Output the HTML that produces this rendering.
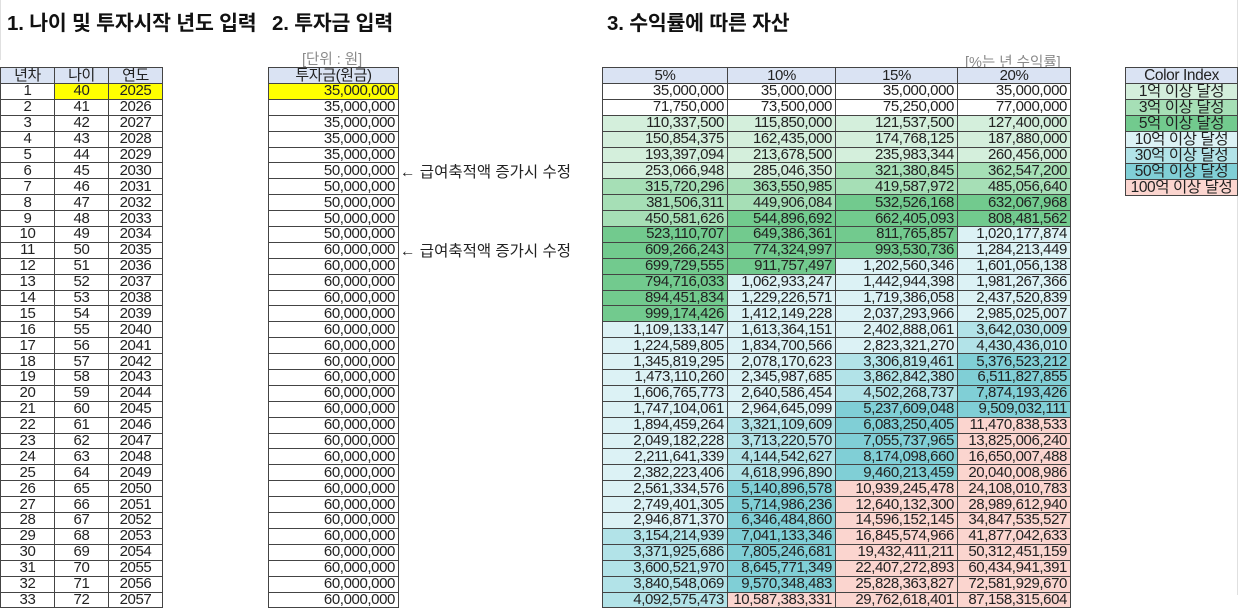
<!DOCTYPE html>
<html><head><meta charset="utf-8"><style>
body{margin:0;width:1241px;height:595px;overflow:hidden;background:#fff;position:relative;font-family:"Liberation Sans","Noto Sans CJK KR","NanumGothic",sans-serif;color:#222}
.t{position:absolute;font-weight:bold;font-size:20.5px;top:6px;letter-spacing:-0.2px;color:#111}
.g{position:absolute;font-size:14.5px;color:#8a8a8a}
table{position:absolute;border-collapse:collapse;table-layout:fixed;font-size:15px}
td{border:1px solid #444;height:14.9px;padding:0 3px;line-height:14px;white-space:nowrap;overflow:hidden;text-align:right;letter-spacing:-0.4px}
tr{height:15.9px}
tr.h td{background:#dae3f3;text-align:center;height:15px}
.c td{text-align:center}
.y{background:#ffff00}
.a{background:#d4efdc}.b{background:#a6dfb6}.d{background:#72ca8e}.e{background:#dcf2f5}.f{background:#b2e3e8}.k{background:#80cfd6}.p{background:#fbd5cf}
.note{position:absolute;left:400px;font-size:15.5px}
#ci td{text-align:center;height:15px;padding:0;font-size:15.5px}
.gl{position:absolute;top:0;width:1px;height:60px;background:#e0e0e0}
</style></head><body>
<div class="gl" style="left:0"></div><div class="gl" style="left:1237px;height:595px"></div>
<div class="t" style="left:7px">1. 나이 및 투자시작 년도 입력</div>
<div class="t" style="left:272px">2. 투자금 입력</div>
<div class="t" style="left:607px">3. 수익률에 따른 자산</div>
<div class="g" style="left:302px;top:48px">[단위 : 원]</div>
<div class="g" style="left:965px;top:51px">[%는 년 수익률]</div>
<div class="note" style="top:160px">← 급여축적액 증가시 수정</div>
<div class="note" style="top:239px">← 급여축적액 증가시 수정</div>

<table style="left:0;top:67px;width:162px" class="c">
<colgroup><col style="width:54px"><col style="width:54px"><col style="width:54px"></colgroup>
<tr class="h"><td>년차</td><td>나이</td><td>연도</td></tr>
<tr><td>1</td><td class="y">40</td><td class="y">2025</td></tr>
<tr><td>2</td><td>41</td><td>2026</td></tr>
<tr><td>3</td><td>42</td><td>2027</td></tr>
<tr><td>4</td><td>43</td><td>2028</td></tr>
<tr><td>5</td><td>44</td><td>2029</td></tr>
<tr><td>6</td><td>45</td><td>2030</td></tr>
<tr><td>7</td><td>46</td><td>2031</td></tr>
<tr><td>8</td><td>47</td><td>2032</td></tr>
<tr><td>9</td><td>48</td><td>2033</td></tr>
<tr><td>10</td><td>49</td><td>2034</td></tr>
<tr><td>11</td><td>50</td><td>2035</td></tr>
<tr><td>12</td><td>51</td><td>2036</td></tr>
<tr><td>13</td><td>52</td><td>2037</td></tr>
<tr><td>14</td><td>53</td><td>2038</td></tr>
<tr><td>15</td><td>54</td><td>2039</td></tr>
<tr><td>16</td><td>55</td><td>2040</td></tr>
<tr><td>17</td><td>56</td><td>2041</td></tr>
<tr><td>18</td><td>57</td><td>2042</td></tr>
<tr><td>19</td><td>58</td><td>2043</td></tr>
<tr><td>20</td><td>59</td><td>2044</td></tr>
<tr><td>21</td><td>60</td><td>2045</td></tr>
<tr><td>22</td><td>61</td><td>2046</td></tr>
<tr><td>23</td><td>62</td><td>2047</td></tr>
<tr><td>24</td><td>63</td><td>2048</td></tr>
<tr><td>25</td><td>64</td><td>2049</td></tr>
<tr><td>26</td><td>65</td><td>2050</td></tr>
<tr><td>27</td><td>66</td><td>2051</td></tr>
<tr><td>28</td><td>67</td><td>2052</td></tr>
<tr><td>29</td><td>68</td><td>2053</td></tr>
<tr><td>30</td><td>69</td><td>2054</td></tr>
<tr><td>31</td><td>70</td><td>2055</td></tr>
<tr><td>32</td><td>71</td><td>2056</td></tr>
<tr><td>33</td><td>72</td><td>2057</td></tr>
</table>

<table style="left:268px;top:67px;width:130px">
<colgroup><col style="width:130px"></colgroup>
<tr class="h"><td>투자금(원금)</td></tr>
<tr><td class="y">35,000,000</td></tr>
<tr><td>35,000,000</td></tr><tr><td>35,000,000</td></tr><tr><td>35,000,000</td></tr><tr><td>35,000,000</td></tr>
<tr><td>50,000,000</td></tr><tr><td>50,000,000</td></tr><tr><td>50,000,000</td></tr><tr><td>50,000,000</td></tr><tr><td>50,000,000</td></tr>
<tr><td>60,000,000</td></tr><tr><td>60,000,000</td></tr><tr><td>60,000,000</td></tr><tr><td>60,000,000</td></tr><tr><td>60,000,000</td></tr>
<tr><td>60,000,000</td></tr><tr><td>60,000,000</td></tr><tr><td>60,000,000</td></tr><tr><td>60,000,000</td></tr><tr><td>60,000,000</td></tr>
<tr><td>60,000,000</td></tr><tr><td>60,000,000</td></tr><tr><td>60,000,000</td></tr><tr><td>60,000,000</td></tr><tr><td>60,000,000</td></tr>
<tr><td>60,000,000</td></tr><tr><td>60,000,000</td></tr><tr><td>60,000,000</td></tr><tr><td>60,000,000</td></tr><tr><td>60,000,000</td></tr>
<tr><td>60,000,000</td></tr><tr><td>60,000,000</td></tr><tr><td>60,000,000</td></tr>
</table>

<table style="left:602px;top:67px;width:468px">
<colgroup><col style="width:125px"><col style="width:108px"><col style="width:122px"><col style="width:113px"></colgroup>
<tr class="h"><td>5%</td><td>10%</td><td>15%</td><td>20%</td></tr>
<tr><td>35,000,000</td><td>35,000,000</td><td>35,000,000</td><td>35,000,000</td></tr>
<tr><td>71,750,000</td><td>73,500,000</td><td>75,250,000</td><td>77,000,000</td></tr>
<tr><td class="a">110,337,500</td><td class="a">115,850,000</td><td class="a">121,537,500</td><td class="a">127,400,000</td></tr>
<tr><td class="a">150,854,375</td><td class="a">162,435,000</td><td class="a">174,768,125</td><td class="a">187,880,000</td></tr>
<tr><td class="a">193,397,094</td><td class="a">213,678,500</td><td class="a">235,983,344</td><td class="a">260,456,000</td></tr>
<tr><td class="a">253,066,948</td><td class="a">285,046,350</td><td class="b">321,380,845</td><td class="b">362,547,200</td></tr>
<tr><td class="b">315,720,296</td><td class="b">363,550,985</td><td class="b">419,587,972</td><td class="b">485,056,640</td></tr>
<tr><td class="b">381,506,311</td><td class="b">449,906,084</td><td class="d">532,526,168</td><td class="d">632,067,968</td></tr>
<tr><td class="b">450,581,626</td><td class="d">544,896,692</td><td class="d">662,405,093</td><td class="d">808,481,562</td></tr>
<tr><td class="d">523,110,707</td><td class="d">649,386,361</td><td class="d">811,765,857</td><td class="e">1,020,177,874</td></tr>
<tr><td class="d">609,266,243</td><td class="d">774,324,997</td><td class="d">993,530,736</td><td class="e">1,284,213,449</td></tr>
<tr><td class="d">699,729,555</td><td class="d">911,757,497</td><td class="e">1,202,560,346</td><td class="e">1,601,056,138</td></tr>
<tr><td class="d">794,716,033</td><td class="e">1,062,933,247</td><td class="e">1,442,944,398</td><td class="e">1,981,267,366</td></tr>
<tr><td class="d">894,451,834</td><td class="e">1,229,226,571</td><td class="e">1,719,386,058</td><td class="e">2,437,520,839</td></tr>
<tr><td class="d">999,174,426</td><td class="e">1,412,149,228</td><td class="e">2,037,293,966</td><td class="e">2,985,025,007</td></tr>
<tr><td class="e">1,109,133,147</td><td class="e">1,613,364,151</td><td class="e">2,402,888,061</td><td class="f">3,642,030,009</td></tr>
<tr><td class="e">1,224,589,805</td><td class="e">1,834,700,566</td><td class="e">2,823,321,270</td><td class="f">4,430,436,010</td></tr>
<tr><td class="e">1,345,819,295</td><td class="e">2,078,170,623</td><td class="f">3,306,819,461</td><td class="k">5,376,523,212</td></tr>
<tr><td class="e">1,473,110,260</td><td class="e">2,345,987,685</td><td class="f">3,862,842,380</td><td class="k">6,511,827,855</td></tr>
<tr><td class="e">1,606,765,773</td><td class="e">2,640,586,454</td><td class="f">4,502,268,737</td><td class="k">7,874,193,426</td></tr>
<tr><td class="e">1,747,104,061</td><td class="e">2,964,645,099</td><td class="k">5,237,609,048</td><td class="k">9,509,032,111</td></tr>
<tr><td class="e">1,894,459,264</td><td class="f">3,321,109,609</td><td class="k">6,083,250,405</td><td class="p">11,470,838,533</td></tr>
<tr><td class="e">2,049,182,228</td><td class="f">3,713,220,570</td><td class="k">7,055,737,965</td><td class="p">13,825,006,240</td></tr>
<tr><td class="e">2,211,641,339</td><td class="f">4,144,542,627</td><td class="k">8,174,098,660</td><td class="p">16,650,007,488</td></tr>
<tr><td class="e">2,382,223,406</td><td class="f">4,618,996,890</td><td class="k">9,460,213,459</td><td class="p">20,040,008,986</td></tr>
<tr><td class="e">2,561,334,576</td><td class="k">5,140,896,578</td><td class="p">10,939,245,478</td><td class="p">24,108,010,783</td></tr>
<tr><td class="e">2,749,401,305</td><td class="k">5,714,986,236</td><td class="p">12,640,132,300</td><td class="p">28,989,612,940</td></tr>
<tr><td class="e">2,946,871,370</td><td class="k">6,346,484,860</td><td class="p">14,596,152,145</td><td class="p">34,847,535,527</td></tr>
<tr><td class="f">3,154,214,939</td><td class="k">7,041,133,346</td><td class="p">16,845,574,966</td><td class="p">41,877,042,633</td></tr>
<tr><td class="f">3,371,925,686</td><td class="k">7,805,246,681</td><td class="p">19,432,411,211</td><td class="p">50,312,451,159</td></tr>
<tr><td class="f">3,600,521,970</td><td class="k">8,645,771,349</td><td class="p">22,407,272,893</td><td class="p">60,434,941,391</td></tr>
<tr><td class="f">3,840,548,069</td><td class="k">9,570,348,483</td><td class="p">25,828,363,827</td><td class="p">72,581,929,670</td></tr>
<tr><td class="f">4,092,575,473</td><td class="p">10,587,383,331</td><td class="p">29,762,618,401</td><td class="p">87,158,315,604</td></tr>
</table>

<table id="ci" style="left:1125px;top:67px;width:112px">
<colgroup><col style="width:112px"></colgroup>
<tr class="h"><td>Color Index</td></tr>
<tr><td class="a">1억 이상 달성</td></tr>
<tr><td class="b">3억 이상 달성</td></tr>
<tr><td class="d">5억 이상 달성</td></tr>
<tr><td class="e">10억 이상 달성</td></tr>
<tr><td class="f">30억 이상 달성</td></tr>
<tr><td class="k">50억 이상 달성</td></tr>
<tr><td class="p">100억 이상 달성</td></tr>
</table>
</body></html>
